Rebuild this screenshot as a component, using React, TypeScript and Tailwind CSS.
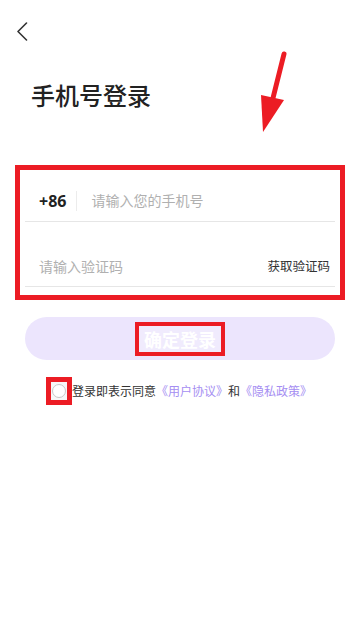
export default function App() {
  return (
    <div className="relative w-[360px] h-[624px] bg-white overflow-hidden font-['Noto_Sans_CJK_SC','Noto_Sans',sans-serif] text-[#222]">
      {/* back */}
      <div className="pt-[22px] pl-[16px] h-[41px]">
        <svg className="block" width="12" height="19" viewBox="0 0 12 19" fill="none">
          <path d="M10.5 1 L2 9.5 L10.5 18" stroke="#333" strokeWidth="1.6" strokeLinecap="round" strokeLinejoin="round" />
        </svg>
      </div>

      {/* title */}
      <h1 className="mt-[38px] pl-[31px] text-[24px] leading-[32px] font-medium text-[#222]">手机号登录</h1>

      {/* form, red annotation box */}
      <div className="mt-[54px] mx-[15px] border-[5px] border-[#ec1c24] px-[5px] pb-[8px]">
        <div className="h-[52px] pt-[10px] flex items-center border-b border-[#e6e6e6] pl-[14px]">
          <span className="text-[16px] font-bold text-[#222] font-['Noto_Sans',sans-serif]">+86</span>
          <span className="ml-[10px] w-px h-[20px] bg-[#ececec]" />
          <span className="ml-[14px] text-[14px] text-[#b0b0b0]">请输入您的手机号</span>
        </div>
        <div className="h-[65px] pt-[24px] flex items-center justify-between border-b border-[#e6e6e6] pl-[14px] pr-[5px]">
          <span className="text-[14px] text-[#b0b0b0]">请输入验证码</span>
          <span className="text-[12.5px] text-[#333]">获取验证码</span>
        </div>
      </div>

      {/* submit */}
      <div className="mt-[17px] mx-[25px] h-[43px] rounded-full bg-[#ece5fd] flex items-center justify-center">
        <div className="border-[4px] border-[#ec1c24] bg-[#f0ebfd] h-[34px] px-[5px] flex items-center">
          <span className="text-[18px] font-bold text-white leading-[26px]">确定登录</span>
        </div>
      </div>

      {/* agreement */}
      <div className="mt-[17px] pl-[46px] flex items-center">
        <div className="w-[26px] h-[28px] border-[5px] border-[#ec1c24] bg-[#f7f7f7] flex items-center justify-center">
          <span className="w-[14px] h-[14px] rounded-full border border-[#c8c8c8] bg-white" />
        </div>
        <p className="text-[12px] text-[#333] whitespace-nowrap">
          登录即表示同意<span className="text-[#a58ef2]">《用户协议》</span>和<span className="text-[#a58ef2]">《隐私政策》</span>
        </p>
      </div>

      {/* red arrow annotation */}
      <svg className="absolute left-[255px] top-[48px]" width="40" height="90" viewBox="0 0 40 90">
        <line x1="29" y1="6" x2="18" y2="50" stroke="#ec1c24" strokeWidth="5" strokeLinecap="round" />
        <polygon points="6,47 29,52 8,84" fill="#ec1c24" />
      </svg>
    </div>
  );
}
